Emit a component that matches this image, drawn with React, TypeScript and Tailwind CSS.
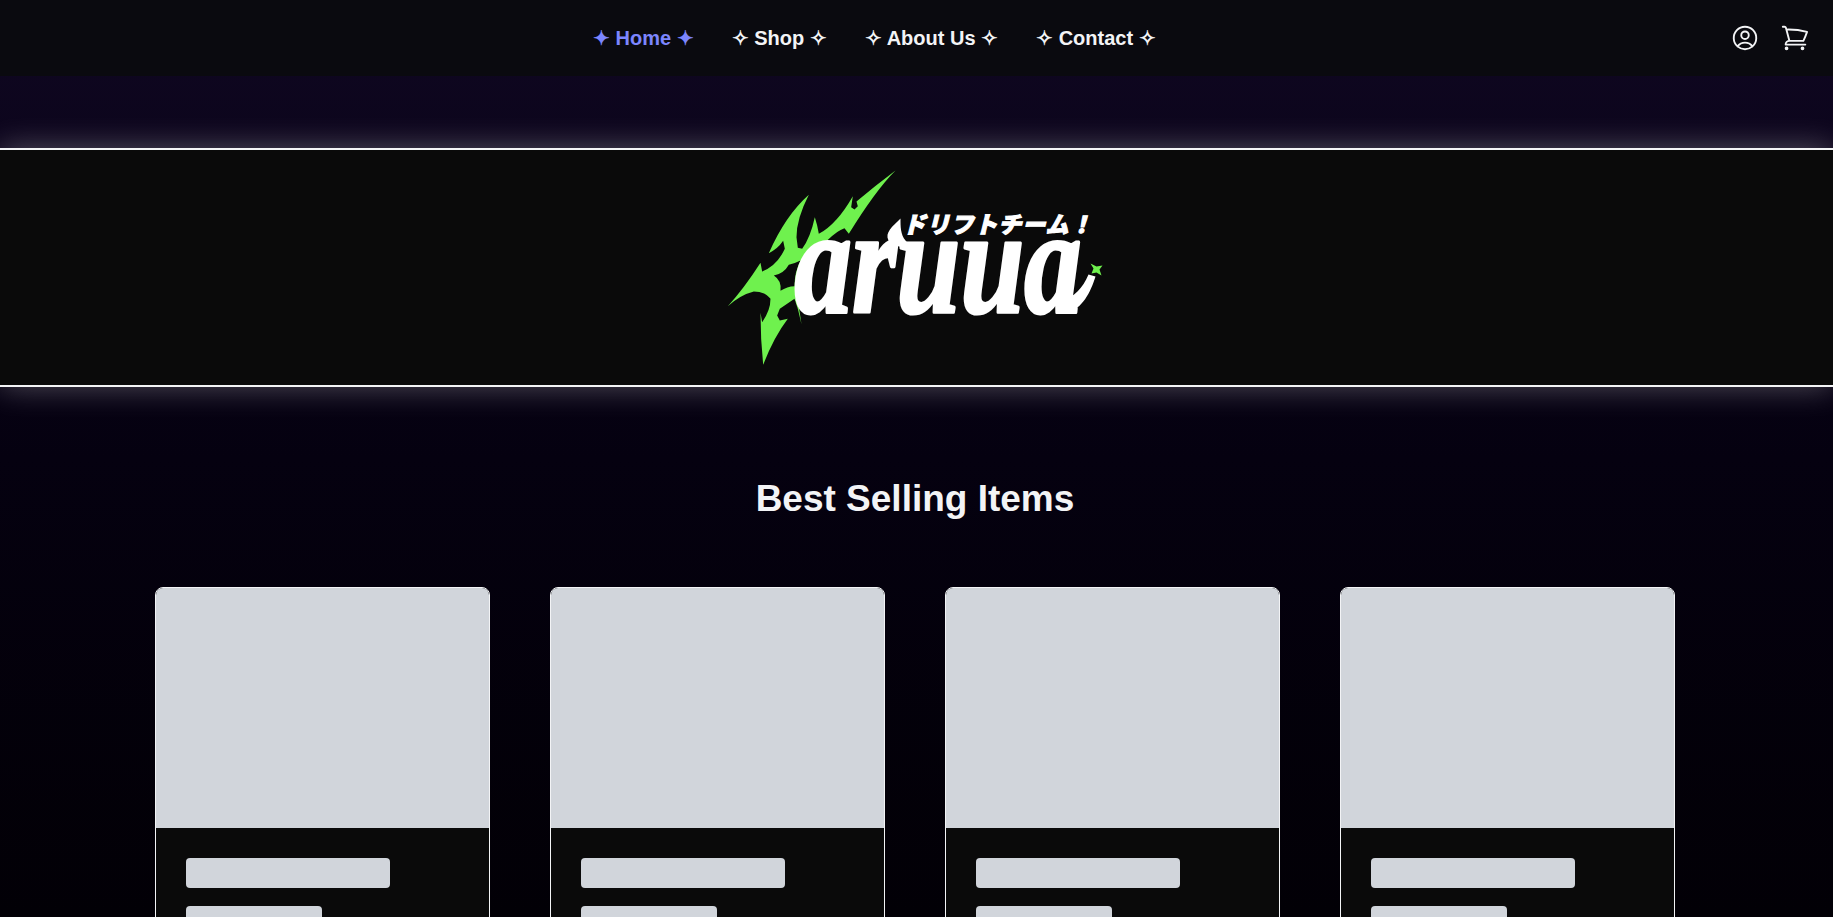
const links = [
  { label: "Home", active: true },
  { label: "Shop", active: false },
  { label: "About Us", active: false },
  { label: "Contact", active: false },
];

// flame mark, traced at 3x from the top left of the mark
const flame =
  "M525 15 Q465 75 385 205 L372 188 Q350 195 320 225 Q270 240 245 280 Q228 340 226 400 L236 430 L243 476 L232 430 L222 400 L178 430 L170 450 L178 465 L202 460 Q160 515 128 598 Q120 520 120 442 L125 470 Q150 435 150 400 Q135 378 100 378 Q60 388 22 422 Q70 370 120 292 L125 318 Q170 300 193 250 L188 226 Q172 250 145 263 Q195 150 265 88 Q228 160 228 215 L232 247 L245 250 Q270 215 283 155 L290 180 L295 205 Q350 175 397 92 L392 125 L402 132 L412 122 L408 108 Q465 60 525 15 Z";

function Logo() {
  return (
    <svg viewBox="681.5 152.5 470 230" className="h-[230px] w-[470px]">
      <g transform="translate(720 165) scale(0.3333)">
        <path d={flame} fill="#6ff14e" />
        <path d="M160 330 Q190 325 205 298 Q220 295 240 285 Q222 320 222 362 Q200 362 180 376 Q184 345 160 330 Z" fill="#0a0a0a" />
      </g>
      <text
        transform="translate(794 311) scale(0.82 1.07)"
        fontFamily="'Liberation Serif', serif"
        fontStyle="italic"
        fontWeight="700"
        fontSize="140"
        fill="#ffffff"
        stroke="#ffffff"
        strokeWidth="3"
        strokeLinejoin="round"
      >
        aruua
      </text>
      {/* swashes on the r and the last a */}
      <path d="M900 218 C892 226 884 232 888 240 C892 246 898 244 902 248 L912 248 L905 240 C900 234 900 226 900 218 Z" fill="#ffffff" />
      <path d="M1066 313 C1082 308 1090 292 1095 276 L1088 274 C1082 288 1074 296 1062 300 Z" fill="#ffffff" />
      <text
        transform="translate(902 232) skewX(-14)"
        fontFamily="'Noto Sans CJK JP', sans-serif"
        fontWeight="900"
        fontSize="23"
        fill="#ffffff"
        stroke="#ffffff"
        strokeWidth="1.1"
        textLength="190"
      >
        ドリフトチーム！
      </text>
      <path
        d="M1090 263 L1096 266 L1102 265 L1099 269 L1101 275 L1096 272 L1091 273 L1093 268 Z"
        fill="#6ff14e"
      />
    </svg>
  );
}

function Card() {
  return (
    <div className="overflow-hidden rounded-lg border border-gray-100 bg-[#0a0a0a]">
      <div className="h-[240px] bg-[#d1d5db]" />
      <div className="flex flex-col gap-[18px] p-[30px]">
        <div className="h-[30px] w-[204px] rounded bg-[#d1d5db]" />
        <div className="h-[30px] w-[136px] rounded bg-[#d1d5db]" />
      </div>
    </div>
  );
}

export default function App() {
  return (
    <div className="h-screen overflow-hidden bg-gradient-to-b from-[#100822] via-[#050110] via-50% to-[#020006] font-['Liberation_Sans',sans-serif] text-gray-100">
      <header className="flex h-[76px] items-center bg-[#0a0a0f]">
        <nav className="ml-[593px] flex gap-[38px] pb-[1px] text-xl font-bold">
          {links.map((link) => (
            <a key={link.label} href="#" className={link.active ? "text-indigo-400" : "text-gray-100"}>
              {link.active ? "✦" : "✧"} {link.label} {link.active ? "✦" : "✧"}
            </a>
          ))}
        </nav>
        <div className="mr-[23px] ml-auto flex gap-5">
          <svg viewBox="0 0 24 24" fill="none" stroke="currentColor" strokeWidth="1.5" strokeLinecap="round" strokeLinejoin="round" className="h-[30px] w-[30px]">
            <path d="M17.982 18.725A7.488 7.488 0 0 0 12 15.75a7.488 7.488 0 0 0-5.982 2.975m11.963 0a9 9 0 1 0-11.963 0m11.963 0A8.966 8.966 0 0 1 12 21a8.966 8.966 0 0 1-5.963-2.275M15 9.75a3 3 0 1 1-6 0 3 3 0 0 1 6 0Z" />
          </svg>
          <svg viewBox="0 0 24 24" fill="none" stroke="currentColor" strokeWidth="1.5" strokeLinecap="round" strokeLinejoin="round" className="h-[30px] w-[30px]">
            <path d="M2.25 3h1.386c.51 0 .955.343 1.087.835l.383 1.437M7.5 14.25a3 3 0 0 0-3 3h15.75m-12.75-3h11.218c1.121-2.3 2.1-4.684 2.924-7.138a60.114 60.114 0 0 0-16.536-1.84M7.5 14.25 5.106 5.272M6 20.25a.75.75 0 1 1-1.5 0 .75.75 0 0 1 1.5 0Zm12.75 0a.75.75 0 1 1-1.5 0 .75.75 0 0 1 1.5 0Z" />
          </svg>
        </div>
      </header>

      <section className="mt-[72px] flex h-[239px] items-center justify-center border-y-2 border-gray-100 bg-[#0a0a0a] shadow-[0_0_30px_rgba(255,255,255,0.3)]">
        <Logo />
      </section>

      <h2 className="mt-[92px] pr-[3px] text-center text-[37px] leading-10 font-bold">Best Selling Items</h2>

      <div className="mt-[68px] ml-[155px] grid w-[1520px] grid-cols-4 gap-[60px]">
        <Card />
        <Card />
        <Card />
        <Card />
      </div>
    </div>
  );
}
